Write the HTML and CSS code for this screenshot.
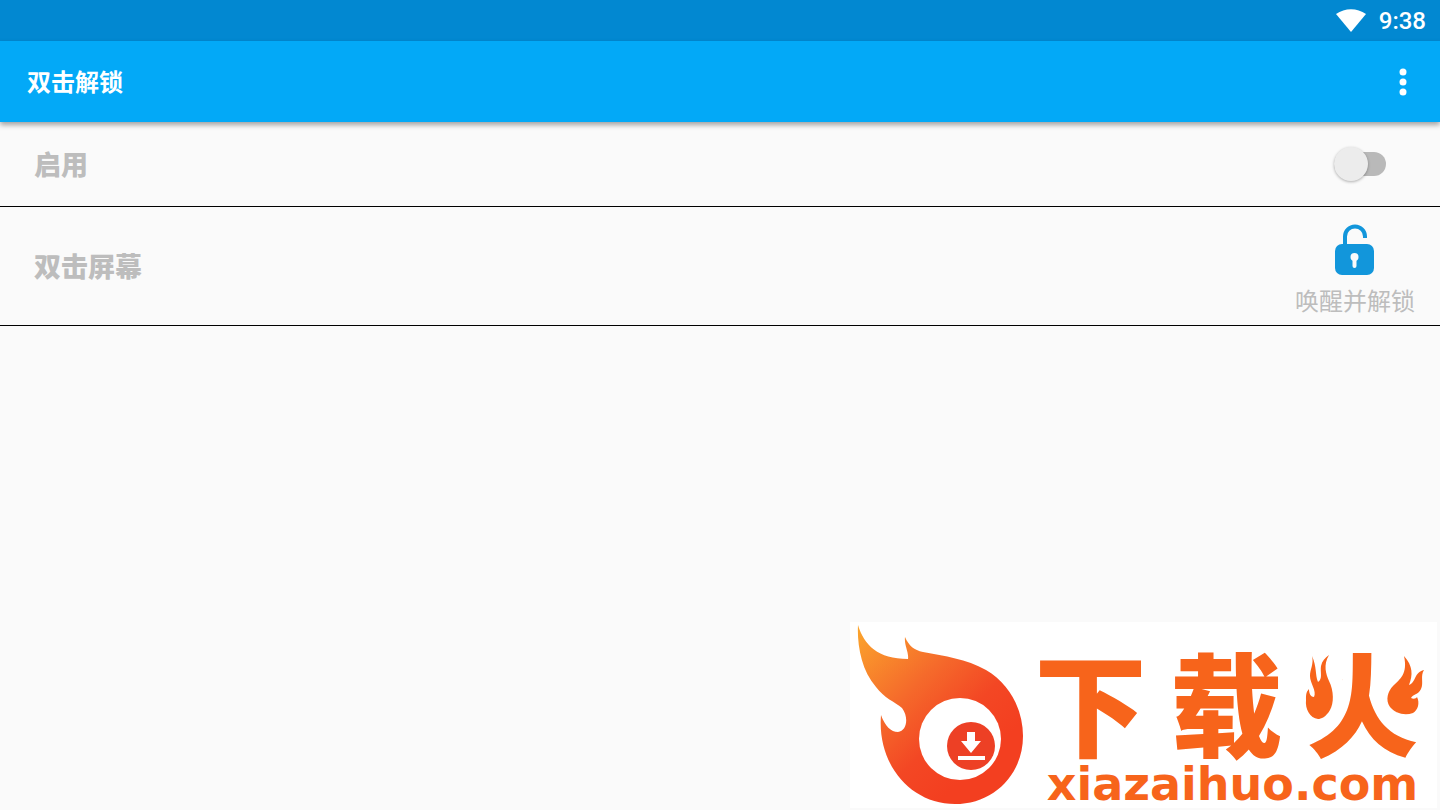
FILE: index.html
```
<!DOCTYPE html>
<html lang="zh-CN">
<head>
    <meta charset="UTF-8">
    <meta name="viewport" content="width=device-width, initial-scale=1.0">
    <title>双击解锁</title>
    <link rel="stylesheet" href="styles.css">
</head>
<body>
    <div class="status-bar">
        <svg class="wifi" viewBox="0 0 30 23" aria-hidden="true">
            <path d="M0 5C9-1.500 21-1.500 30 5L15 23Z" fill="#fff"/>
        </svg>
        <span>9:38</span>
    </div>
    <header class="app-bar">
        <h1>双击解锁</h1>
        <button class="menu-button" aria-label="更多选项">
            <svg viewBox="0 0 8 28" aria-hidden="true">
                <circle cx="4" cy="4" r="3.500"/>
                <circle cx="4" cy="14" r="3.500"/>
                <circle cx="4" cy="24" r="3.500"/>
            </svg>
        </button>
    </header>
    <main class="settings">
        <div class="row">
            <label for="enable" class="row-title">启用</label>
            <input type="checkbox" role="switch" id="enable" class="switch">
        </div>
        <div class="row action-row">
            <span id="doubleTap" class="row-title">双击屏幕</span>
            <button class="unlock-button" aria-describedby="doubleTap">
                <svg class="lock" viewBox="0 0 40 52" aria-hidden="true">
                    <path d="M10 21V12.500A10 10 0 0 1 30 12.500V14" fill="none" stroke="#1296db" stroke-width="4"/>
                    <rect x="0" y="20" width="39" height="31" rx="7" fill="#1296db"/>
                    <circle cx="19.500" cy="33" r="4" fill="#fafafa"/>
                    <path d="M19.500 34V42" stroke="#fafafa" stroke-width="4" stroke-linecap="round"/>
                </svg>
                <span>唤醒并解锁</span>
            </button>
        </div>
    </main>
    <div class="watermark">
        <svg class="flame" viewBox="0 0 175 186" aria-hidden="true">
            <defs>
                <linearGradient id="fire" x1="0" y1="0" x2="0.700" y2="0.800">
                    <stop offset="0" stop-color="#fba62c"/>
                    <stop offset="0.450" stop-color="#f56a2b"/>
                    <stop offset="0.750" stop-color="#f34724"/>
                    <stop offset="1" stop-color="#f33f20"/>
                </linearGradient>
            </defs>
            <path d="M8 3C14 23 28 37 58 37C59 30 54 23 55 15C59 24 64 28 73 30C95 34 116 37 136 48C160 62 173 88 173 114C173 153 143 182 105 182C61 182 27 143 31 93C35 104 41 110 48 110C57 109 59 95 52 86C45 80 34 76 26 65C11 48 7 22 8 3Z" fill="url(#fire)"/>
            <circle cx="110" cy="117" r="41" fill="#fff"/>
            <circle cx="121" cy="124" r="24" fill="#ed4025"/>
            <path d="M117 110H125V119H131L121 131L111 119H117ZM108 134H135V138H108Z" fill="#fff"/>
        </svg>
        <div class="brand">
            <div class="brand-name">
                <span>下</span>
                <span>载</span>
                <span class="fire-char">火
                    <svg viewBox="0 0 130 72" aria-hidden="true">
                        <path d="M2 18H43V50L36 63H2ZM80 14H126V60H80Z" fill="#fff"/>
                        <path d="M13 4C18 15 16 23 19 30C24 27 21 20 22 14C23 9 26 6 30 3C24 13 27 22 30 29C35 39 35 51 31 58C27 65 22 67 19 67C11 66 6 57 7 48C7 43 7 40 10 37C10 42 12 45 15 45C18 39 11 31 11 24C11 17 15 12 13 4Z"/>
                        <path d="M105 4C114 14 114 23 110 33C117 31 115 20 125 18C121 24 125 31 122 37C119 43 114 42 112 46C114 47 117 47 118 45C121 51 119 58 114 61C105 64 96 61 91 55C86 48 89 39 94 34C101 27 109 22 105 4Z"/>
                    </svg>
                </span>
            </div>
            <div class="brand-url">xiazaihuo.com</div>
        </div>
    </div>
</body>
</html>
```
FILE: styles.css
```
* {
    box-sizing: border-box;
}
body {
    font-family: Roboto, "Noto Sans CJK SC", sans-serif;
    margin: 0;
    min-height: 100vh;
    background: #fafafa;
}
button {
    font: inherit;
    background: none;
    border: none;
    padding: 0;
    cursor: pointer;
}
svg {
    display: block;
}
.status-bar {
    display: flex;
    justify-content: flex-end;
    align-items: center;
    gap: 13px;
    height: 41px;
    padding: 0 14px;
    background: #0288d1;
    color: #fff;
    font-size: 24px;
    font-weight: 500;
}
.wifi {
    width: 30px;
    height: 23px;
}
.app-bar {
    display: flex;
    justify-content: space-between;
    align-items: center;
    height: 81px;
    padding: 0 27px;
    background: #03a9f7;
    color: #fff;
    box-shadow: 0 3px 5px rgba(0, 0, 0, 0.35);
}
.app-bar h1 {
    margin: 0;
    padding-bottom: 2px;
    font-size: 24px;
    font-weight: 700;
}
.menu-button {
    padding: 0 6px;
}
.menu-button svg {
    width: 8px;
    height: 28px;
    fill: #fff;
}
.row {
    display: flex;
    justify-content: space-between;
    align-items: center;
    min-height: 85px;
    padding: 0 54px 0 34px;
    border-bottom: 1px solid #000;
    color: #bdbdbd;
}
.row-title {
    padding-bottom: 2px;
    font-size: 27px;
    font-weight: 900;
}
.action-row {
    min-height: 119px;
    padding-right: 25px;
}
.switch {
    appearance: none;
    display: flex;
    align-items: center;
    width: 52px;
    height: 24px;
    margin: 0;
    border-radius: 12px;
    background: #b9b9b9;
    cursor: pointer;
}
.switch::before {
    content: "";
    width: 34px;
    height: 34px;
    border-radius: 50%;
    background: #ececec;
    box-shadow: 0 1px 3px rgba(0, 0, 0, 0.3);
}
.switch:checked {
    justify-content: flex-end;
}
.unlock-button {
    display: flex;
    flex-direction: column;
    align-items: center;
    gap: 8px;
    padding-top: 12px;
    color: #bdbdbd;
    font-size: 24px;
    font-weight: 400;
    line-height: 36px;
}
.lock {
    width: 40px;
    height: 52px;
}
.watermark {
    position: absolute;
    right: 3px;
    bottom: 2px;
    display: flex;
    height: 186px;
    padding-right: 9px;
    background: #fff;
    color: #f7641b;
}
.flame {
    width: 175px;
    height: 186px;
}
.brand {
    display: flex;
    flex-direction: column;
    align-items: center;
    width: 403px;
    padding-top: 22px;
}
.brand-name {
    display: flex;
    gap: 24px;
    font-family: "Noto Sans CJK SC", sans-serif;
    font-size: 112px;
    font-weight: 900;
    line-height: 112px;
}
.fire-char {
    position: relative;
}
.fire-char svg {
    position: absolute;
    top: 8px;
    left: -8px;
    width: 130px;
    fill: #f7641b;
}
.brand-url {
    padding-left: 12px;
    font-family: "DejaVu Sans", sans-serif;
    font-size: 46px;
    font-weight: 700;
    line-height: 56px;
}
```
